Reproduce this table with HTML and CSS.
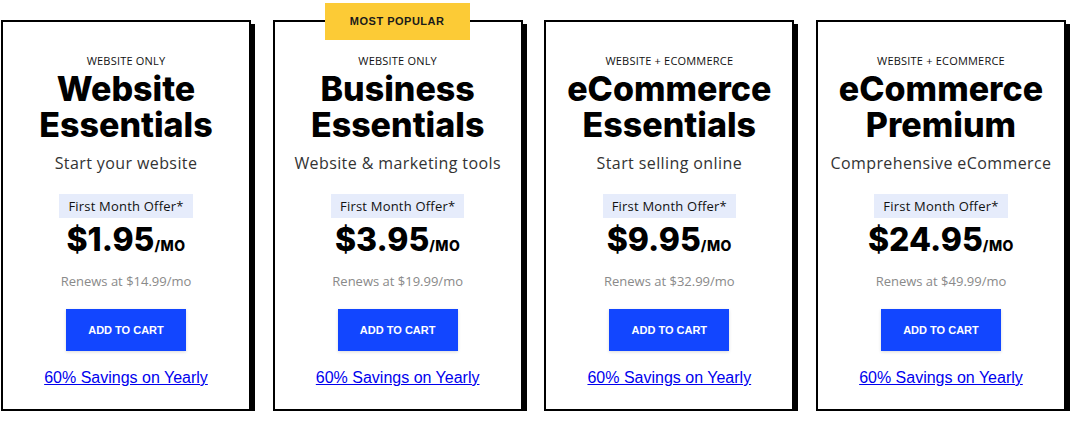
FILE: index.html
```html
<!doctype html>
<html>
<head>
<meta charset="utf-8">
<title>Plans</title>
<link rel="stylesheet" href="styles.css">
</head>
<body>
<div class="plans">
	<div class="plan">
		<p class="kind">Website Only</p>
		<h2 class="name">Website Essentials</h2>
		<p class="desc">Start your website</p>
		<span class="offer">First Month Offer*</span>
		<p class="price">$1.95<small>/mo</small></p>
		<p class="renew">Renews at $14.99/mo</p>
		<a href="javascript:;" class="cart">Add to cart</a>
		<a href="javascript:;" class="yearly">60% Savings on Yearly</a>
	</div>
	<div class="plan">
		<span class="badge">Most Popular</span>
		<p class="kind">Website Only</p>
		<h2 class="name">Business Essentials</h2>
		<p class="desc">Website &amp; marketing tools</p>
		<span class="offer">First Month Offer*</span>
		<p class="price">$3.95<small>/mo</small></p>
		<p class="renew">Renews at $19.99/mo</p>
		<a href="javascript:;" class="cart">Add to cart</a>
		<a href="javascript:;" class="yearly">60% Savings on Yearly</a>
	</div>
	<div class="plan">
		<p class="kind">Website + eCommerce</p>
		<h2 class="name">eCommerce Essentials</h2>
		<p class="desc">Start selling online</p>
		<span class="offer">First Month Offer*</span>
		<p class="price">$9.95<small>/mo</small></p>
		<p class="renew">Renews at $32.99/mo</p>
		<a href="javascript:;" class="cart">Add to cart</a>
		<a href="javascript:;" class="yearly">60% Savings on Yearly</a>
	</div>
	<div class="plan">
		<p class="kind">Website + eCommerce</p>
		<h2 class="name">eCommerce Premium</h2>
		<p class="desc">Comprehensive eCommerce</p>
		<span class="offer">First Month Offer*</span>
		<p class="price">$24.95<small>/mo</small></p>
		<p class="renew">Renews at $49.99/mo</p>
		<a href="javascript:;" class="cart">Add to cart</a>
		<a href="javascript:;" class="yearly">60% Savings on Yearly</a>
	</div>
</div>
</body>
</html>
```

FILE: styles.css
```css
*{ margin:0; padding:0; box-sizing:border-box;}
body{ background:#fff; font-family:"Open Sans", Arial, sans-serif; color:#111;}

.plans{ width:1066px; padding:20px 0 0 1px; display:flex; justify-content:space-between;}
.plan{ position:relative; width:250px; height:391px; border:2px solid #000; box-shadow:4px 4px 0 #000; background:#fff; display:flex; flex-direction:column; align-items:center; padding-top:32px; text-align:center;}

.badge{ position:absolute; top:-19px; left:50%; margin-left:-73px; width:145px; height:37px; line-height:37px; background:#fccb36; font-family:"Liberation Sans", Arial, sans-serif; font-weight:bold; font-size:11px; letter-spacing:.5px; text-transform:uppercase; color:#1a1a1a;}

.kind{ font-size:11px; line-height:14px; text-transform:uppercase; letter-spacing:.2px; color:#111;}
.name{ margin-top:3px; font-family:Inter, "Liberation Sans", sans-serif; font-weight:800; font-size:34px; line-height:36px; color:#000; width:240px;}
.desc{ margin-top:10px; font-size:16px; line-height:20px; letter-spacing:.4px; color:#333;}

.offer{ margin-top:21px; height:24px; line-height:24px; padding:0 9px; background:#e6ecfb; font-size:13px; letter-spacing:.2px; color:#111;}
.price{ margin-top:5px; font-family:Inter, "Liberation Sans", sans-serif; font-weight:800; font-size:32px; line-height:34px; color:#000;}
.price small{ font-size:14px; text-transform:uppercase; letter-spacing:.5px;}
.renew{ margin-top:9px; font-size:13px; line-height:18px; color:#8a8a8a;}

.cart{ margin-top:19px; width:120px; height:42px; line-height:42px; background:#1246ff; color:#fff; text-decoration:none; text-transform:uppercase; font-family:"Liberation Sans", Arial, sans-serif; font-weight:bold; font-size:11px; box-shadow:0 1px 3px rgba(0,0,0,.15);}
.yearly{ margin-top:17px; font-family:"Liberation Sans", Arial, sans-serif; font-size:16px; line-height:20px; color:#0000ee;}
```
